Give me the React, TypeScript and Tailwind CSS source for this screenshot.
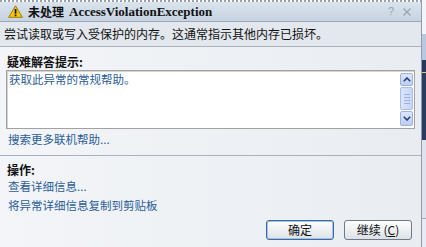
import React from "react";

const CJK = "font-['Noto_Sans_CJK_SC','Noto_Sans',sans-serif]";

const WarningIcon = () => (
  <svg width="15" height="13" viewBox="0 0 15 13" className="shrink-0">
    <path d="M7.5 0.8 L14.4 12.3 L0.6 12.3 Z" fill="#f7c600" stroke="#9a7400" strokeWidth="0.9" strokeLinejoin="round" />
    <rect x="6.7" y="4" width="1.7" height="4.6" fill="#111" />
    <rect x="6.7" y="9.5" width="1.7" height="1.7" fill="#111" />
  </svg>
);

const ScrollBar = () => (
  <div className="flex h-full w-[13px] flex-col justify-between py-[2px]">
    <div className="flex h-[13px] items-center justify-center rounded-[2px] border border-[#9db2dd] bg-gradient-to-b from-[#dde7fb] to-[#bccdf2]">
      <svg width="8" height="5" viewBox="0 0 8 5">
        <path d="M0.8 4.2 L4 1 L7.2 4.2" fill="none" stroke="#24407a" strokeWidth="1.6" />
      </svg>
    </div>
    <div className="mx-auto flex h-[23px] w-[13px] flex-col items-center justify-center gap-[2px] rounded-[2px] border border-[#a9bde6] bg-gradient-to-r from-[#dbe5fa] to-[#c7d6f5]">
      <div className="h-px w-[6px] bg-[#9fb2da]" />
      <div className="h-px w-[6px] bg-[#9fb2da]" />
      <div className="h-px w-[6px] bg-[#9fb2da]" />
      <div className="h-px w-[6px] bg-[#9fb2da]" />
    </div>
    <div className="flex h-[15px] items-center justify-center rounded-[2px] border border-[#9db2dd] bg-gradient-to-b from-[#dde7fb] to-[#bccdf2]">
      <svg width="8" height="5" viewBox="0 0 8 5">
        <path d="M0.8 0.8 L4 4 L7.2 0.8" fill="none" stroke="#24407a" strokeWidth="1.6" />
      </svg>
    </div>
  </div>
);

const Button = ({ children, primary }: { children: React.ReactNode; primary?: boolean }) => (
  <div
    className={`flex h-[20px] w-[68px] items-center justify-center rounded-[3px] border bg-gradient-to-b from-[#fdfdfd] via-[#eef0f3] to-[#dde1e6] text-[12px] leading-none text-[#111] ${CJK} ${
      primary ? "border-[#3d6a9a] shadow-[inset_0_0_0_1px_#9fc6ea]" : "border-[#6f7a87]"
    }`}
  >
    {children}
  </div>
);

export default function App() {
  return (
    <div className="flex h-[247px] w-[426px] overflow-hidden bg-white">
      <div className="flex w-[422px] shrink-0 flex-col border-r border-[#8e9bac] bg-gradient-to-r from-[#f3f5f8] to-[#e9edf1]">
        <div className="h-[2px] bg-[repeating-linear-gradient(90deg,#9aa3ad_0px,#9aa3ad_2px,#ffffff_2px,#ffffff_4px)]" />

        <div className="flex h-[20px] items-center border-b border-[#9aa8b8] bg-gradient-to-b from-[#dae3ec] to-[#c6d3e1] pl-[8px] pr-[8px]">
          <WarningIcon />
          <span className={`ml-[5px] text-[12px] font-bold text-[#111] ${CJK}`}>未处理</span>
          <span className="ml-[5px] font-['Liberation_Serif',serif] text-[13px] font-bold text-[#111]">
            AccessViolationException
          </span>
          <div className="ml-auto flex items-center gap-[9px] pr-[2px]">
            <span className="font-['Liberation_Sans',sans-serif] text-[11px] text-[#97a3b1]">?</span>
            <svg width="8" height="8" viewBox="0 0 8 8">
              <path d="M0.5 0.5 L7.5 7.5 M7.5 0.5 L0.5 7.5" stroke="#97a3b1" strokeWidth="1.2" />
            </svg>
          </div>
        </div>

        <div className={`flex h-[25px] items-center border-b border-[#a9b3bf] bg-[#e3e8ee] pl-[4px] text-[12px] text-[#111] ${CJK}`}>
          尝试读取或写入受保护的内存。这通常指示其他内存已损坏。
        </div>

        <div className={`flex flex-1 flex-col ${CJK}`}>
          <div className="mt-[7px] h-[16px] pl-[7px] text-[12px] font-bold leading-[16px] text-[#111]">
            疑难解答提示:
          </div>
          <div className="ml-[6px] flex h-[59px] w-[409px] border border-[#a2a2a2] bg-white pr-[1px] shadow-[inset_1px_1px_0_#d4d4d4]">
            <div className="flex-1 pl-[2px] pt-[1px] text-[11.5px] leading-[14px] text-[#2b5d96]">获取此异常的常规帮助。</div>
            <ScrollBar />
          </div>
          <div className="mt-[2px] h-[16px] pl-[8px] text-[11.5px] leading-[16px] text-[#2b5d96]">
            搜索更多联机帮助...
          </div>
          <div className="mt-[8px] h-px bg-[#a9b1bc]" />
          <div className="mt-[6px] h-[15px] pl-[7px] text-[12px] font-bold leading-[15px] text-[#111]">操作:</div>
          <div className="h-[19px] pl-[8px] text-[11.5px] leading-[19px] text-[#2b5d96]">查看详细信息...</div>
          <div className="h-[19px] pl-[8px] text-[11.5px] leading-[19px] text-[#2b5d96]">将异常详细信息复制到剪贴板</div>
          <div className="mt-[5px] flex justify-end gap-[10px] pr-[9px]">
            <Button primary>确定</Button>
            <Button>
              继续 (<span className="underline">C</span>)
            </Button>
          </div>
        </div>
      </div>

      <div className="flex flex-1 flex-col">
        <div className="h-[34px] bg-[#f3f5f8]" />
        <div className="h-[26px] bg-[#b9c8de]" />
        <div className="h-[12px] bg-[#26385c]" />
        <div className="h-px bg-[#e4cc6a]" />
        <div className="h-[67px] bg-[#2a3c60]" />
        <div className="h-[78px] bg-[#e0e4ea]" />
        <div className="h-px bg-[#a0a8b4]" />
        <div className="flex-1 bg-[#e8ebef]" />
      </div>
    </div>
  );
}
